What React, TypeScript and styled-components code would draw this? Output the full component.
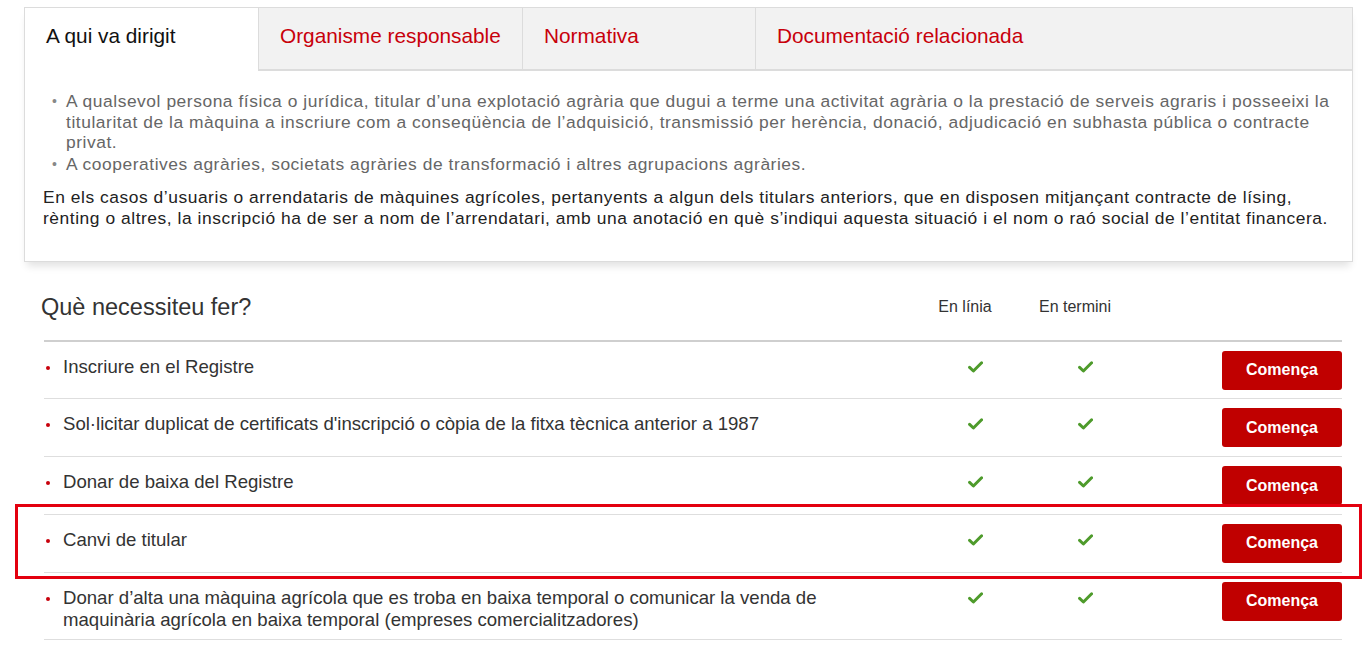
import React from "react";
import styled, { createGlobalStyle } from "styled-components";

const Global = createGlobalStyle`
  html, body { margin: 0; padding: 0; background: #fff; }
  body { font-family: "Liberation Sans", Arial, sans-serif; color: #333; }
  * { box-sizing: border-box; }
`;

const Page = styled.div`
  width: 1371px;
  padding: 7px 0 0 24px;
`;

const Panel = styled.div`
  width: 1329px;
  border: 1px solid #dcdcdc;
  background: #fff;
  box-shadow: 0 7px 8px -3px rgba(0, 0, 0, 0.12);
`;

const TabBar = styled.div`
  display: flex;
  height: 63px;
`;

const Tab = styled.div<{ $active?: boolean; $grow?: boolean; $w?: number }>`
  display: flex;
  align-items: center;
  padding: 0 21px 6px;
  width: ${(p) => (p.$grow ? "auto" : `${p.$w}px`)};
  flex: ${(p) => (p.$grow ? "1" : "none")};
  font-size: 20.8px;
  color: ${(p) => (p.$active ? "#111" : "#c8000b")};
  background: ${(p) => (p.$active ? "#fff" : "#f2f2f2")};
  border-left: ${(p) => (p.$active ? "none" : "1px solid #dcdcdc")};
  border-bottom: ${(p) => (p.$active ? "2px solid transparent" : "2px solid #dcdcdc")};
`;

const Content = styled.div`
  padding: 20px 14px 32px 18px;
`;

const BulletList = styled.ul`
  margin: 0 0 12px;
  padding: 0 0 0 23px;
  list-style: none;
`;

const BulletItem = styled.li`
  position: relative;
  font-size: 17.4px;
  letter-spacing: 0.55px;
  line-height: 20.5px;
  color: #666;
  margin-bottom: 1.5px;
  &::before {
    content: "•";
    position: absolute;
    left: -14px;
    top: 0;
    color: #888;
    font-size: 14px;
  }
`;

const Para = styled.p`
  margin: 0;
  font-size: 17.4px;
  letter-spacing: 0.55px;
  line-height: 21px;
  color: #222;
`;

const Section = styled.div`
  margin: 17px 0 0 20px;
  width: 1298px;
`;

const Grid = styled.div`
  display: grid;
  grid-template-columns: 876px 110px 110px 1fr;
`;

const HeaderCell = styled.div<{ $title?: boolean }>`
  display: flex;
  align-items: center;
  justify-content: ${(p) => (p.$title ? "flex-start" : "center")};
  height: 61px;
  padding: ${(p) => (p.$title ? "0 0 4px 0" : "0 20px 4px 0")};
  margin-left: ${(p) => (p.$title ? "-3px" : "0")};
  font-size: ${(p) => (p.$title ? "23.5px" : "16px")};
  color: #333;
  white-space: nowrap;
`;

const HeaderRule = styled.div`
  height: 2px;
  background: #cfcfcf;
`;

const Row = styled.div`
  position: relative;
  display: grid;
  grid-template-columns: 876px 110px 110px 1fr;
  align-items: start;
  padding: 9px 0 8.75px;
  border-bottom: 1px solid #dedede;
`;

const RowText = styled.div`
  position: relative;
  padding: 5px 60px 0 19px;
  font-size: 18.6px;
  line-height: 22px;
  color: #333;
  &::before {
    content: "";
    position: absolute;
    left: 2px;
    top: 15px;
    width: 4px;
    height: 4px;
    border-radius: 50%;
    background: #c8000b;
  }
`;

const CheckCell = styled.div`
  display: flex;
  justify-content: center;
  padding-top: 10px;
`;

const ButtonCell = styled.div`
  display: flex;
  justify-content: flex-end;
`;

const StartButton = styled.button`
  width: 120px;
  height: 39px;
  border: none;
  border-radius: 3px;
  background: #c00000;
  color: #fff;
  font-family: "Liberation Sans", Arial, sans-serif;
  font-weight: bold;
  font-size: 16px;
  cursor: pointer;
`;

const Highlight = styled.div`
  position: absolute;
  left: -29px;
  right: -20px;
  top: -11px;
  bottom: -7px;
  border: 3px solid #e3000f;
  pointer-events: none;
`;

const Check = () => (
  <svg width="15" height="12" viewBox="0 0 15 12" aria-hidden="true">
    <polyline
      points="1.6,6.4 5.4,10 13.6,1.8"
      fill="none"
      stroke="#4e9b2b"
      strokeWidth="3"
      strokeLinecap="round"
      strokeLinejoin="round"
    />
  </svg>
);

const rows = [
  "Inscriure en el Registre",
  "Sol·licitar duplicat de certificats d'inscripció o còpia de la fitxa tècnica anterior a 1987",
  "Donar de baixa del Registre",
  "Canvi de titular",
  "Donar d’alta una màquina agrícola que es troba en baixa temporal o comunicar la venda de maquinària agrícola en baixa temporal (empreses comercialitzadores)",
];

export default function App() {
  return (
    <Page>
      <Global />
      <Panel>
        <TabBar>
          <Tab $active $w={233}>A qui va dirigit</Tab>
          <Tab $w={264}>Organisme responsable</Tab>
          <Tab $w={233}>Normativa</Tab>
          <Tab $grow>Documentació relacionada</Tab>
        </TabBar>
        <Content>
          <BulletList>
            <BulletItem>
              A qualsevol persona física o jurídica, titular d’una explotació agrària que dugui a terme una activitat agrària o la prestació de serveis agraris i posseeixi la titularitat de la màquina a inscriure com a conseqüència de l’adquisició, transmissió per herència, donació, adjudicació en subhasta pública o contracte privat.
            </BulletItem>
            <BulletItem>
              A cooperatives agràries, societats agràries de transformació i altres agrupacions agràries.
            </BulletItem>
          </BulletList>
          <Para>
            En els casos d’usuaris o arrendataris de màquines agrícoles, pertanyents a algun dels titulars anteriors, que en disposen mitjançant contracte de lísing, rènting o altres, la inscripció ha de ser a nom de l’arrendatari, amb una anotació en què s’indiqui aquesta situació i el nom o raó social de l’entitat financera.
          </Para>
        </Content>
      </Panel>
      <Section>
        <Grid>
          <HeaderCell $title>Què necessiteu fer?</HeaderCell>
          <HeaderCell>En línia</HeaderCell>
          <HeaderCell>En termini</HeaderCell>
          <HeaderCell />
        </Grid>
        <HeaderRule />
        {rows.map((r, i) => (
          <Row key={i}>
            {i === 3 && <Highlight />}
            <RowText>{r}</RowText>
            <CheckCell>
              <Check />
            </CheckCell>
            <CheckCell>
              <Check />
            </CheckCell>
            <ButtonCell>
              <StartButton>Comença</StartButton>
            </ButtonCell>
          </Row>
        ))}
      </Section>
    </Page>
  );
}
